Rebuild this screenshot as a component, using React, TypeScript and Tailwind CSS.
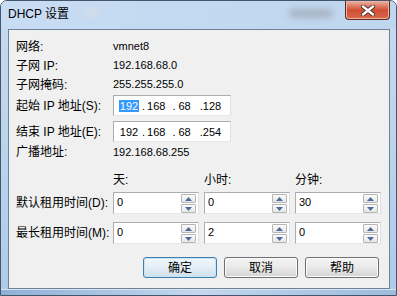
import React from 'react';

const font = "font-['Liberation_Sans','Noto_Sans_CJK_SC',sans-serif]";

function IpBox({ highlight, last }: { highlight?: boolean; last: string }) {
    return (
        <div className="w-[118px] h-[21px] bg-white border border-[#abadb3] border-r-[#dbdfe6] border-b-[#e3e9ef] flex items-center text-[11px] leading-[12px] text-black whitespace-pre">
            <span className={`ml-[5px] w-[20px] text-center ${highlight ? 'bg-[#3399ff] text-white' : ''}`}>192</span>
            <span className="ml-[3px]">.</span>
            <span className="ml-[2px]">168</span>
            <span className="ml-[7px]">.</span>
            <span className="ml-[3px]">68</span>
            <span className="ml-[9px]">.</span>
            <span>{last}</span>
        </div>
    );
}

function Arrow({ up }: { up?: boolean }) {
    return (
        <svg width="7" height="4" viewBox="0 0 7 4">
            {up ? <path d="M0 4 L3.5 0 L7 4 Z" fill="#4d6a9c" /> : <path d="M0 0 L3.5 4 L7 0 Z" fill="#4d6a9c" />}
        </svg>
    );
}

function Spin({ value }: { value: string }) {
    return (
        <div className="w-[86px] h-[22px] bg-white border border-[#abadb3] border-r-[#dbdfe6] border-b-[#e3e9ef] flex items-start">
            <span className="ml-[3px] mt-[2px] text-[11px] leading-[14px] text-black">{value}</span>
            <div className="ml-auto mr-[2px] mt-[1px] flex flex-col gap-[1px]">
                <div className="w-[15px] h-[9px] border border-[#b5b5b5] rounded-[1px] bg-gradient-to-b from-[#fbfbfb] to-[#e6e6e6] flex items-center justify-center">
                    <Arrow up />
                </div>
                <div className="w-[15px] h-[9px] border border-[#b5b5b5] rounded-[1px] bg-gradient-to-b from-[#fbfbfb] to-[#e6e6e6] flex items-center justify-center">
                    <Arrow />
                </div>
            </div>
        </div>
    );
}

function Btn({ label, primary }: { label: string; primary?: boolean }) {
    return (
        <div
            className={`w-[74px] h-[21px] rounded-[3px] border flex items-center justify-center text-[12px] leading-[14px] text-black ${
                primary
                    ? 'border-[#3c7fb1] bg-gradient-to-b from-[#f0f7fc] via-[#e3eef6] to-[#cfdfea] shadow-[inset_0_0_0_1px_#c7e3f5]'
                    : 'border-[#707070] bg-gradient-to-b from-[#f4f4f4] via-[#e9e9e9] to-[#d4d4d4] shadow-[inset_0_0_0_1px_#fcfcfc]'
            }`}
        >
            {label}
        </div>
    );
}

export default function App() {
    return (
        <div className={`${font} w-[397px] h-[296px] rounded-t-[7px] border border-[#44566b] overflow-hidden flex flex-col bg-gradient-to-b from-[#c5dbf2] via-[#bcd3ec] to-[#aecbe9]`}>
            {/* title bar */}
            <div className="h-[28px] flex items-start bg-gradient-to-r from-[#c8ddf3] via-[#c3d9f1] to-[#bfd6ef]">
                <span className="pl-[7px] pt-[6px] text-[12px] leading-[14px] text-black">DHCP 设置</span>
                <span className="ml-[14px] mt-[8px] w-[16px] h-[8px] rounded-full bg-[#d4dde8] blur-[3px]" />
                <span className="ml-[190px] mt-[8px] w-[44px] h-[9px] rounded-full bg-[#a7b4c3] blur-[3px]" />
                <div className="ml-auto mr-[6px] w-[45px] h-[19px] rounded-b-[4px] border border-t-0 border-[#5b2a22] bg-gradient-to-b from-[#eab2a4] via-[#cf4f35] to-[#d9684a] shadow-[inset_0_0_0_1px_#f0b3a4] flex items-center justify-center">
                    <svg width="14" height="11" viewBox="0 0 14 11">
                        <path d="M2 1.5 L12 9.5 M12 1.5 L2 9.5" stroke="#4a2a25" strokeWidth="4.2" strokeLinecap="round" />
                        <path d="M2 1.5 L12 9.5 M12 1.5 L2 9.5" stroke="#ffffff" strokeWidth="2.4" strokeLinecap="round" />
                    </svg>
                </div>
            </div>

            {/* body with side frames */}
            <div className="flex-1 flex pl-[7px] pr-[6px]">
                <div className="flex-1 border border-[#6f8196] bg-[#f0f0f0] flex flex-col pl-[7px] pt-[7px] text-[12px] text-black">
                    <div className="h-[19px] flex items-center">
                        <span className="w-[97px]">网络:</span>
                        <span className="text-[11px]">vmnet8</span>
                    </div>
                    <div className="h-[19px] flex items-center">
                        <span className="w-[97px]">子网 IP:</span>
                        <span className="text-[11px]">192.168.68.0</span>
                    </div>
                    <div className="h-[19px] flex items-center">
                        <span className="w-[97px]">子网掩码:</span>
                        <span className="text-[11px]">255.255.255.0</span>
                    </div>
                    <div className="mt-[1px] h-[21px] flex items-center">
                        <span className="w-[97px]">起始 IP 地址(S):</span>
                        <IpBox highlight last="128" />
                    </div>
                    <div className="mt-[5px] h-[21px] flex items-center">
                        <span className="w-[97px]">结束 IP 地址(E):</span>
                        <IpBox last="254" />
                    </div>
                    <div className="h-[20px] flex items-center">
                        <span className="w-[97px]">广播地址:</span>
                        <span className="text-[11px]">192.168.68.255</span>
                    </div>
                    <div className="mt-[8px] h-[20px] flex items-center">
                        <span className="w-[97px]" />
                        <span className="w-[91px]">天:</span>
                        <span className="w-[91px]">小时:</span>
                        <span>分钟:</span>
                    </div>
                    <div className="mt-[2px] h-[22px] flex items-center">
                        <span className="w-[97px]">默认租用时间(D):</span>
                        <div className="flex gap-[5px]">
                            <Spin value="0" />
                            <Spin value="0" />
                            <Spin value="30" />
                        </div>
                    </div>
                    <div className="mt-[8px] h-[22px] flex items-center">
                        <span className="w-[97px]">最长租用时间(M):</span>
                        <div className="flex gap-[5px]">
                            <Spin value="0" />
                            <Spin value="2" />
                            <Spin value="0" />
                        </div>
                    </div>
                    <div className="mt-[13px] flex justify-end gap-[7px] pr-[10px]">
                        <Btn label="确定" primary />
                        <Btn label="取消" />
                        <Btn label="帮助" />
                    </div>
                </div>
            </div>

            {/* bottom frame */}
            <div className="h-[6px] bg-gradient-to-r from-[#8fb0d6] via-[#c2d8ee] to-[#9ebbdd] border-t border-[#d8e6f4]" />
        </div>
    );
}
